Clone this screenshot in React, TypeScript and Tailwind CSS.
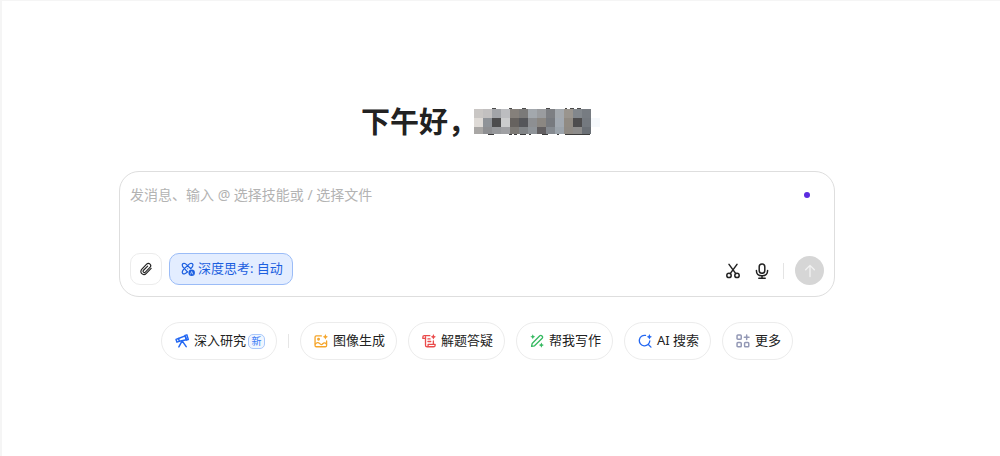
import React from 'react';

interface IconProps {
    className?: string;
}

interface Skill {
    label: string;
    icon: React.FC<IconProps>;
    color: string;
}

const MOSAIC_ROWS = [
    ['#c9c6c4', '#c2c0c0', '#a2a4a8', '#bcbdc0', '#85807b', '#7b7a79', '#a3a8ad', '#9a9c9f', '#7d7f83', '#a4a9ae', '#9a958e', '#82878c', '#777c82', '#ffffff'],
    ['#dedad6', '#8f9398', '#4d4d4e', '#cbcccd', '#66625f', '#55565a', '#8d8f92', '#8b8782', '#777a7f', '#a2a9b1', '#918b83', '#4e4d4e', '#74797f', '#f6f9fc'],
    ['#a9a7a5', '#8e8f92', '#97999c', '#9fa0a3', '#7c7975', '#818487', '#8f9499', '#625f61', '#858a90', '#9ca4ac', '#8f8a84', '#8d8c8b', '#6b7076', '#ffffff'],
];

// bits of the strokes that stick out above and below the mosaic: [x, width]
const TOP_EDGES = [[18, 4], [35, 3], [48, 4], [72, 4], [91, 2], [96, 4], [103, 4]];
const BOTTOM_EDGES = [[14, 6], [35, 3], [40, 3], [46, 6], [55, 2], [68, 6], [83, 2], [91, 25]];

const stroke = {
    viewBox: '0 0 16 16',
    fill: 'none',
    stroke: 'currentColor',
    strokeWidth: 1.5,
    strokeLinecap: 'round' as const,
    strokeLinejoin: 'round' as const,
    'aria-hidden': true,
};

const SPARK = 'M13 0L14 2.2L16 3.2L14 4.200L13 6.400L12 4.200L10 3.2L12 2.2Z';

const TelescopeIcon: React.FC<IconProps> = ({ className }) => (
    <svg {...stroke} className={className} strokeWidth={1.7}>
        <path d="M1.2 6.2L4 5.1L5 8.4L2.2 9.3Z" />
        <path d="M4 5.1L11.6 2.2L13.1 6.6L5 8.4" />
        <path d="M11.4 1.6L13.6 1L15.2 6.2L13.1 6.9Z" />
        <path d="M8 8.2L4.4 14.8M8.4 8.2L12.8 14.4" />
    </svg>
);

const ImageIcon: React.FC<IconProps> = ({ className }) => (
    <svg {...stroke} className={className}>
        <path d="M8.4 2.2H2.6Q1.2 2.2 1.2 3.6V13.2Q1.2 14.6 2.6 14.6H13Q14.4 14.6 14.4 13.2V8" />
        <path d="M1.6 11.4Q4.2 8.4 6.6 11Q8.4 13 10 11.2Q12 9 14.2 11.4" />
        <circle cx="5.2" cy="6" r="0.9" />
        <path d={SPARK} fill="currentColor" stroke="none" />
    </svg>
);

const ScrollIcon: React.FC<IconProps> = ({ className }) => (
    <svg {...stroke} className={className}>
        <path d="M9 1.8H2.6Q1 1.8 1 3.4V5H4" />
        <path d="M4 3V12.8Q4 14.6 5.8 14.6H13.2Q15 14.6 15 12.8V11.8H7V13.2Q7 14.6 5.6 14.6" />
        <path d="M13 8V11.6M6.8 5.6H9.2M6.8 8.6H10" />
        <path d={SPARK} fill="currentColor" stroke="none" />
    </svg>
);

const WritingIcon: React.FC<IconProps> = ({ className }) => (
    <svg {...stroke} className={className}>
        <path d="M1.8 14.2L2.5 10.8L11.2 2.1Q12.4 1 13.7 2.3Q15 3.6 13.9 4.8L5.2 13.5Z" />
        <path d="M3.2 0.4L4.1 2.3L6 3.200L4.1 4.1L3.2 6L2.3 4.1L0.4 3.200L2.3 2.3Z" fill="currentColor" stroke="none" />
        <path d="M13 9.8L13.9 11.8L15.9 12.7L13.9 13.6L13 15.6L12.100 13.6L10.100 12.7L12.100 11.8Z" fill="currentColor" stroke="none" />
    </svg>
);

const SearchIcon: React.FC<IconProps> = ({ className }) => (
    <svg {...stroke} className={className}>
        <path d="M8.6 1.6A6 6 0 1 0 13.5 7.8M11.8 12L14.8 15" />
        <path d={SPARK} fill="currentColor" stroke="none" />
    </svg>
);

const MoreIcon: React.FC<IconProps> = ({ className }) => (
    <svg {...stroke} className={className} strokeWidth={1.7}>
        <rect x="1.2" y="1.2" width="4.800" height="4.800" rx="1" />
        <rect x="1.2" y="9.800" width="4.800" height="4.800" rx="1" />
        <rect x="9.800" y="9.800" width="4.800" height="4.800" rx="1" />
        <path d="M12.200 1V6.400M9.500 3.700H14.900" />
    </svg>
);

const AtomIcon: React.FC<IconProps> = ({ className }) => (
    <svg {...stroke} className={className} strokeWidth={1.400}>
        <path d="M7.500 4.200C5.600 1.800 3.300 0.800 2 2C0.700 3.300 1.700 5.700 4 7.500C1.700 9.400 0.700 11.800 2 13.100C3.200 14.300 5.400 13.400 7.300 11.300" />
        <path d="M7.500 4.200C9.500 1.800 11.800 0.800 13.100 2C14.400 3.300 13.300 5.700 11.100 7.500" />
        <path d="M4 7.500L7.500 4.200L11.100 7.500M4 7.500L7.300 11.200" />
        <circle cx="7.500" cy="7.700" r="0.700" fill="currentColor" stroke="none" />
        <circle cx="12.200" cy="12.200" r="3.700" fill="currentColor" stroke="none" />
        <path d="M11 13.700L12.200 10.800L13.400 13.700" stroke="#e3edff" strokeWidth="0.800" />
    </svg>
);

const ClipIcon: React.FC<IconProps> = ({ className }) => (
    <svg {...stroke} className={className} strokeWidth={1.300}>
        <path d="M13.900 7.200L8.400 12.900C6.900 14.500 4.700 14.700 3.200 13.300C1.700 11.900 1.800 9.700 3.300 8.100L8.700 2.500C9.800 1.400 11.500 1.300 12.600 2.400C13.700 3.500 13.600 5.100 12.500 6.200L7.300 11.500C6.600 12.200 5.700 12.200 5.100 11.600C4.500 11 4.600 10.100 5.200 9.400L9.900 4.700" />
    </svg>
);

const ScissorsIcon: React.FC<IconProps> = ({ className }) => (
    <svg {...stroke} className={className}>
        <circle cx="4" cy="12.400" r="2.200" />
        <circle cx="12" cy="12.400" r="2.200" />
        <path d="M4 1.400L10.800 10.600M12 1.400L5.200 10.600" />
    </svg>
);

const MicIcon: React.FC<IconProps> = ({ className }) => (
    <svg {...stroke} className={className}>
        <rect x="5.200" y="0.900" width="5.600" height="9.400" rx="2.800" />
        <path d="M2.400 7.400C2.400 10.800 4.600 12.800 8 12.800C11.400 12.800 13.600 10.800 13.600 7.400M8 12.800V15.200M4.800 15.200H11.200" />
    </svg>
);

const ArrowUpIcon: React.FC<IconProps> = ({ className }) => (
    <svg {...stroke} className={className}>
        <path d="M8 14.400V1.800M3 6.600L8 1.600L13 6.600" />
    </svg>
);

const SKILLS: Skill[] = [
    { label: '图像生成', icon: ImageIcon, color: 'text-[#f5a52a]' },
    { label: '解题答疑', icon: ScrollIcon, color: 'text-[#ea4b4b]' },
    { label: '帮我写作', icon: WritingIcon, color: 'text-[#35b960]' },
    { label: 'AI 搜索', icon: SearchIcon, color: 'text-[#2468f2]' },
    { label: '更多', icon: MoreIcon, color: 'text-[#9398b5]' },
];

const chipClass =
    'flex h-[38px] items-center rounded-full border border-[#ececec] bg-white pl-[13px] pr-[11px] text-[13px] whitespace-nowrap text-[#222222]';

const MaskedName: React.FC = () => (
    <svg className="-ml-[3px] h-7 w-[126px]" viewBox="0 0 126 28" shapeRendering="crispEdges" aria-hidden="true">
        {TOP_EDGES.map(([x, width]) => (
            <rect key={x} x={x} y="0" width={width} height="1" fill="#4a4a4a" />
        ))}
        {BOTTOM_EDGES.map(([x, width]) => (
            <rect key={x} x={x} y="26" width={width} height="1" fill="#3c3c3c" />
        ))}
        {MOSAIC_ROWS.map((row, y) =>
            row.map((color, x) => (
                <rect key={`${y}-${x}`} x={x * 9} y={1 + y * 9} width="9" height={y === 2 ? 7 : 9} fill={color} />
            ))
        )}
    </svg>
);

const Composer: React.FC = () => (
    <form
        className="relative w-full rounded-[20px] border border-[#dedede] bg-white px-[10px] pt-3 pb-[11px]"
        onSubmit={event => event.preventDefault()}
    >
        <textarea
            aria-label="发消息"
            placeholder="发消息、输入 @ 选择技能或 / 选择文件"
            className="block h-[69px] w-full resize-none bg-transparent text-[14px] leading-[22px] text-[#222222] outline-none placeholder:text-[#b3b3b3]"
        />
        <span className="absolute top-5 right-6 h-[6px] w-[6px] rounded-full bg-[#5b2be0]" />
        <div className="flex items-end justify-between">
            <div className="flex items-center gap-[7px]">
                <button
                    type="button"
                    aria-label="附件"
                    className="flex h-8 w-8 items-center justify-center rounded-[10px] border border-[#ececec] text-[#222222]"
                >
                    <ClipIcon className="h-[14px] w-[14px]" />
                </button>
                <button
                    type="button"
                    className="flex h-8 items-center gap-[3px] rounded-[10px] border border-[#9bbcf7] bg-[#e3edff] pl-[11px] pr-[9px] text-[13px] text-[#1c5fe0]"
                >
                    <AtomIcon className="h-[14px] w-[14px]" />
                    深度思考: 自动
                </button>
            </div>
            <div className="flex items-center">
                <button type="button" aria-label="截图" className="text-[#222222]">
                    <ScissorsIcon className="h-4 w-4" />
                </button>
                <button type="button" aria-label="语音输入" className="ml-[13px] text-[#222222]">
                    <MicIcon className="h-4 w-4" />
                </button>
                <span className="mr-[11px] ml-[13px] h-4 w-px bg-[#e4e4e4]" />
                <button
                    type="submit"
                    aria-label="发送"
                    className="flex h-[29px] w-[29px] items-center justify-center rounded-full bg-[#d6d6d6] text-[#f2f2f2]"
                >
                    <ArrowUpIcon className="h-[14px] w-[14px]" />
                </button>
            </div>
        </div>
    </form>
);

const SkillBar: React.FC = () => (
    <nav className="flex items-center justify-center gap-[11px]">
        <button type="button" className={chipClass}>
            <TelescopeIcon className="mr-[5px] h-[14px] w-[14px] text-[#2468f2]" />
            深入研究
            <span className="ml-[2px] flex h-[15px] w-[17px] items-center justify-center rounded-[5px] border border-[#a9c8fb] bg-[#f0f6ff] text-[10px] leading-none text-[#3b7cf5]">
                新
            </span>
        </button>
        <span className="h-[14px] w-px bg-[#e6e6e6]" />
        {SKILLS.map(({ label, icon: Icon, color }) => (
            <button key={label} type="button" className={chipClass}>
                <span className={`mr-[5px] ${color}`}>
                    <Icon className="h-[14px] w-[14px]" />
                </span>
                {label}
            </button>
        ))}
    </nav>
);

const App: React.FC = () => (
    <main className="min-h-screen border-t border-l-2 border-[#f5f5f5] bg-white pt-[101px] pr-12 font-['Noto_Sans','Noto_Sans_CJK_SC',sans-serif]">
        <div className="mx-auto flex max-w-[716px] flex-col">
            <h1 className="flex h-10 items-center justify-center pl-[7px] text-[29px] font-bold whitespace-nowrap text-[#222222]">
                下午好，
                <MaskedName />
            </h1>
            <div className="mt-[29px] mb-[25px]">
                <Composer />
            </div>
            <SkillBar />
        </div>
    </main>
);

export default App;
